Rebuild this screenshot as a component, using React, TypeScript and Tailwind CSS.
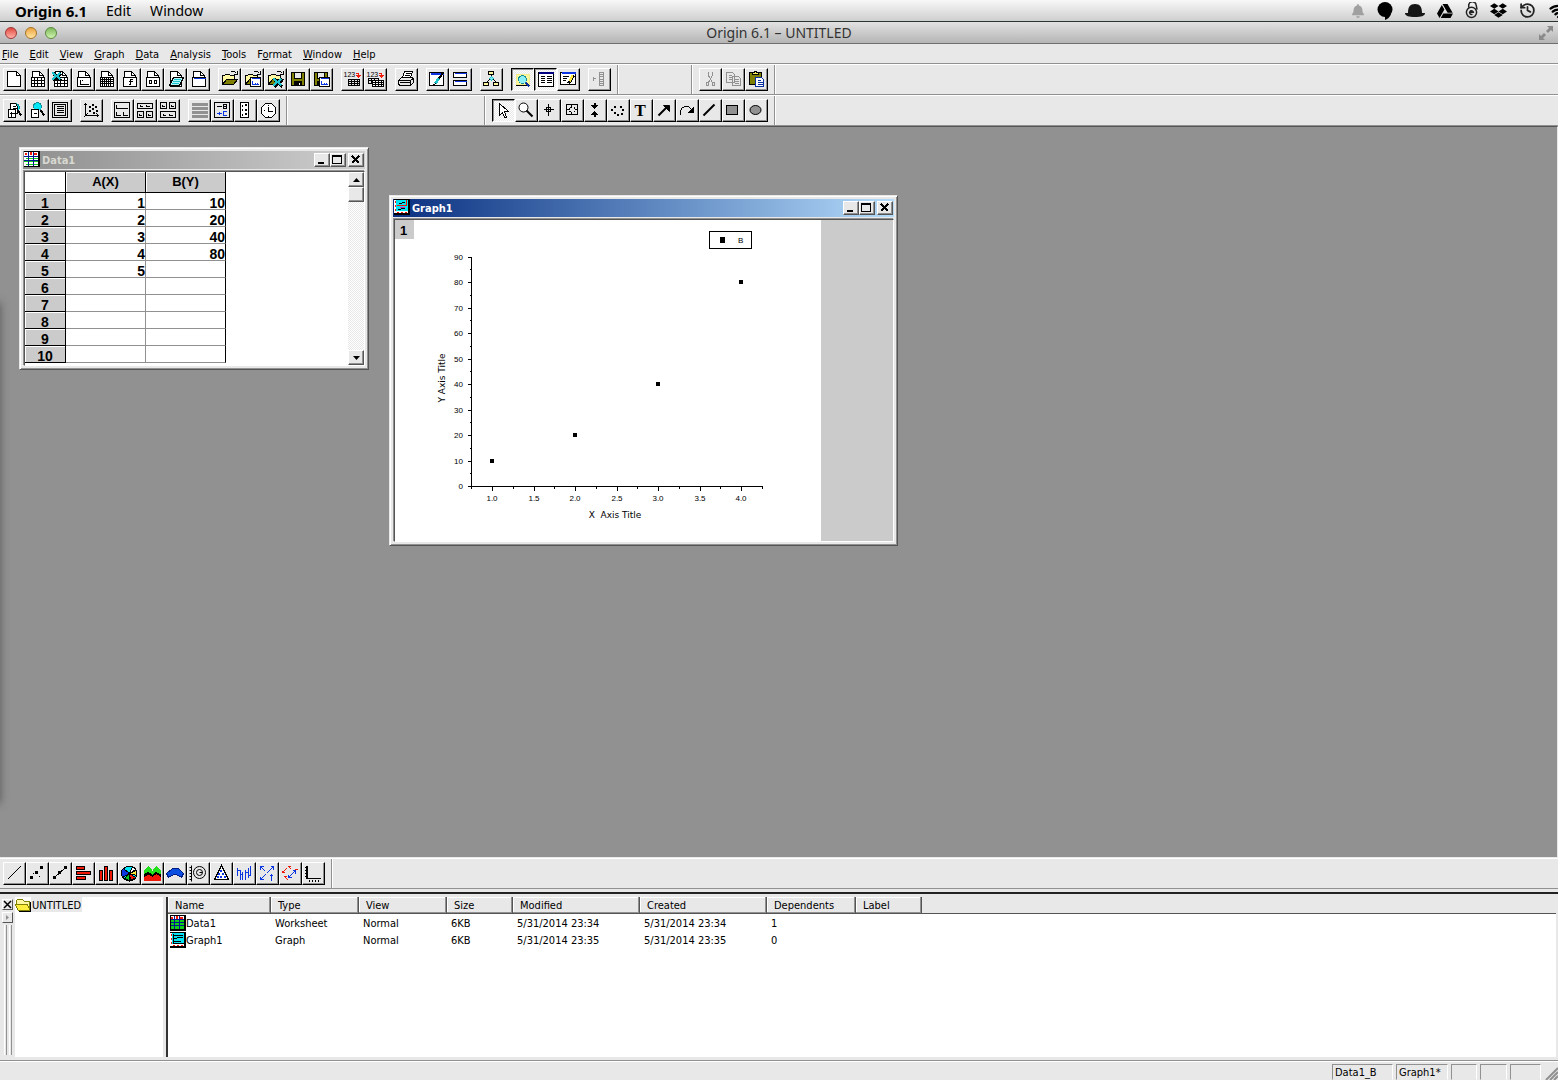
import type { ReactNode } from "react";
import clsx from "clsx";
import { History, Wifi } from "lucide-react";
import { FaBell, FaDropbox, FaGoogleDrive } from "react-icons/fa";

interface StrokeProps {
  d: string;
  s?: string;
  f?: string;
  w?: number;
}

// one pixel stroke, coordinates are pixel positions inside the button
function P({ d, s = "#000", f = "none", w = 1 }: StrokeProps) {
  return <path d={d} stroke={s} fill={f} strokeWidth={w} />;
}

function Icon({ children, smooth }: { children: ReactNode; smooth?: boolean }) {
  return (
    <svg
      viewBox="1 1 21 21"
      className="block h-[21px] w-[21px]"
      shapeRendering={smooth ? "auto" : "crispEdges"}
      aria-hidden="true"
    >
      <g transform="translate(.5 .5)">{children}</g>
    </svg>
  );
}

const CYAN = "#00e5f5";
const OLIVE = "#808000";
const BLUE = "#0a35e0";
const RED = "#f01808";
const GRAY = "#919191";

function Page() {
  return (
    <>
      <P d="M6 18V3h7l4 4v11z" f="#fff" />
      <P d="M13 3v4h4" />
    </>
  );
}

function PageBox({ children }: { children?: ReactNode }) {
  return (
    <Icon>
      <Page />
      <P d="M5 9h13v9h-13z" f="#fff" />
      {children}
    </Icon>
  );
}

function Folder() {
  return (
    <>
      <P d="M4 16V7h2l1-1h4l1 1h4v3" f="#fff8a0" />
      <P d="M4 16l4-5h11l-4 5z" f={OLIVE} />
      <P d="M12 4l1-1h3l2 2M19 2v4h-4" />
    </>
  );
}

function Floppy() {
  return (
    <>
      <P d="M4 4h13v13h-13z" f={OLIVE} />
      <P d="M7 4h7v6h-7z" f="#e8e8e8" />
      <P d="M7 13h7v4h-7z" f="#000" />
      <P d="M12 14v2" s="#fff" />
    </>
  );
}

function Excel({ x = 0, y = 0 }: { x?: number; y?: number }) {
  return (
    <g transform={`translate(${x} ${y})`}>
      <P d="M4 5l8 7M12 5l-8 7" w={3} />
      <P d="M3 4l8 7M11 4l-8 7" s="#1cc3cc" w={2} />
    </g>
  );
}

function MiniWindow() {
  return (
    <>
      <P d="M9 9h10v9h-10z" f="#fff" />
      <P d="M10 10h8" s={BLUE} />
      <P d="M11 12v4h6M14 16v-2M16 16v-2" s={BLUE} />
    </>
  );
}

function ImportArrow() {
  return (
    <>
      <text x="2" y="8" className="font-['Liberation_Sans'] text-[7px]">123</text>
      <P d="M14 5h3v3" s={RED} />
      <P d="M15 7h4l-2 2z" s={RED} f={RED} />
    </>
  );
}

type Tool = { label: string; icon: ReactNode; pressed?: boolean };

const newTools: Tool[] = [
  { label: "New Project", icon: <Icon><P d="M4 3h9l4 4v11h-13z" f="#fff" /><P d="M13 3v4h4" /></Icon> },
  { label: "New Worksheet", icon: <PageBox><P d="M5 12h13M5 15h13M8 9v9M11 9v9M15 9v9" /></PageBox> },
  { label: "New Excel", icon: <PageBox><P d="M5 12h13M5 15h13M8 9v9M11 9v9M15 9v9" /><Excel /></PageBox> },
  { label: "New Graph", icon: <PageBox><P d="M8 11v5h8M9 12h1M12 16v-1M14 16v-1" /></PageBox> },
  { label: "New Matrix", icon: <PageBox><P d="M5 11h13M5 13h13M5 15h13M7 9v9M9 9v9M11 9v9M13 9v9M15 9v9" /></PageBox> },
  { label: "New Function", icon: <PageBox><P d="M14 11h-2v5h-2M10 13h4" /></PageBox> },
  { label: "New Layout", icon: <PageBox><P d="M8 12h2v3h-2zM13 12h2v3h-2z" /></PageBox> },
  { label: "New Notes", icon: <Icon><Page /><P d="M9 9h10l-4 8h-10z" f="#b5f7fa" /><P d="M9 11h7M8 13h7M7 15h7" s="#1cc3cc" /></Icon> },
  { label: "New Window", icon: <PageBox><P d="M6 10h12" s={BLUE} /></PageBox> },
];

const fileTools: Tool[] = [
  { label: "Open", icon: <Icon><Folder /></Icon> },
  { label: "Open Template", icon: <Icon><Folder /><MiniWindow /></Icon> },
  { label: "Open Excel", icon: <Icon><Folder /><Excel x={6} y={6} /></Icon> },
  { label: "Save Project", icon: <Icon><Floppy /></Icon> },
  { label: "Save Template", icon: <Icon><Floppy /><MiniWindow /></Icon> },
];

const importTools: Tool[] = [
  { label: "Import ASCII", icon: <Icon><ImportArrow /><P d="M7 11h11v6h-11zM7 13h11M7 15h11M10 11v6M13 11v6M16 11v6" /></Icon> },
  { label: "Import Multiple", icon: <Icon><ImportArrow /><P d="M4 10h10v5h-10zM4 12h10M7 10v5M10 10v5" /><P d="M8 12h11v6h-11z" f="#fff" /><P d="M8 14h11M8 16h11M11 12v6M14 12v6M17 12v6" /></Icon> },
];

const printTools: Tool[] = [
  {
    label: "Print",
    icon: (
      <Icon>
        <P d="M7 9l2-6h8l-2 6z" f="#fff" />
        <P d="M10 5h5M9 7h5" />
        <P d="M3 12l3-3h10l2 1v4l-3 3h-11l-1-2z" f="#e8e8e8" />
        <P d="M3 12h12v4M15 12l3-2M4 14h11" />
      </Icon>
    ),
  },
];

const windowTools: Tool[] = [
  {
    label: "Refresh",
    icon: (
      <Icon>
        <P d="M3 4h14v13h-14z" f="#fff" />
        <P d="M4 5h13M4 6h13" s={BLUE} />
        <P d="M11 12l6-8" w={2} />
        <P d="M9 15l3-5" s="#1cc3cc" w={3} />
        <P d="M7 16l3-1" />
      </Icon>
    ),
  },
  {
    label: "Duplicate",
    icon: (
      <Icon>
        <P d="M4 4h13v5h-13zM4 12h13v5h-13z" f="#fff" />
        <P d="M5 5h12M5 13h12" s={BLUE} />
      </Icon>
    ),
  },
];

const codeTools: Tool[] = [
  {
    label: "Custom Routine",
    icon: (
      <Icon>
        <P d="M11 6v3M6 14l3-3M16 14l-3-3" />
        <P d="M8 3h5v3h-5zM3 14h5v3h-5zM13 14h5v3h-5z" f="#fff7a0" />
        <P d="M11 8l2 2-2 2-2-2z" f="#7fe9ef" s="#1cc3cc" />
      </Icon>
    ),
  },
];

const viewTools: Tool[] = [
  {
    label: "Project Explorer",
    pressed: true,
    icon: (
      <Icon>
        <P d="M5 6h13v10h-13z" s="#f5ec8a" f="#fbf6a0" />
        <P d="M4 17h11" />
        <P d="M14 14l4 4" s="#0a2fa0" w={2} />
        <circle cx="11" cy="11" r="4" fill="#8bf0f5" stroke="#128c96" />
      </Icon>
    ),
  },
  {
    label: "Results Log",
    pressed: true,
    icon: (
      <Icon>
        <P d="M4 4h15v14h-15z" f="#fff" />
        <P d="M4 4h15M4 5h15" s="#000080" />
        <P d="M6 8h4M12 8h5M6 10h4M12 10h5M6 12h4M12 12h5M6 14h4M12 14h5" />
      </Icon>
    ),
  },
  {
    label: "Script Window",
    icon: (
      <Icon>
        <P d="M3 4h15v12h-15z" f="#fff" />
        <P d="M4 4h14M4 5h14" s={BLUE} />
        <P d="M5 8h6M5 10h4M5 12h3" />
        <P d="M11 15l5-8" w={3} />
        <P d="M12 13l3-6" s="#ffe93a" w={2} />
      </Icon>
    ),
  },
];

const columnTools: Tool[] = [
  {
    label: "Add New Columns",
    icon: <Icon><P d="M11 4h4v13h-4zM11 6h4M11 8h4M11 11h4M11 13h4M11 15h4M4 10h3M5 8v4" s={GRAY} /></Icon>,
  },
];

const editTools: Tool[] = [
  {
    label: "Cut",
    icon: (
      <Icon>
        <P d="M9 3v4l4 7M13 3v4l-4 7" s={GRAY} />
        <P d="M7 14h2v3h-2zM13 14h2v3h-2z" s={GRAY} />
      </Icon>
    ),
  },
  {
    label: "Copy",
    icon: (
      <Icon>
        <P d="M4 4h6l2 2v8h-8zM10 8h6l2 2v7h-8z" s={GRAY} f="#e8e8e8" />
        <P d="M6 7h3M6 9h3M6 11h3M12 11h4M12 13h4M12 15h4" s={GRAY} />
      </Icon>
    ),
  },
  {
    label: "Paste",
    icon: (
      <Icon>
        <P d="M4 4h12v12h-12z" f={OLIVE} />
        <P d="M7 6v-2h2v-1h2v1h2v2z" f="#fff35c" />
        <P d="M10 9h6l2 2v7h-8z" f="#fff" s="#0a2fa0" />
        <P d="M12 12h3M12 14h5M12 16h5" s="#0a2fa0" />
      </Icon>
    ),
  },
];

const zoomTools: Tool[] = [
  {
    label: "Zoom In",
    icon: (
      <Icon>
        <circle cx="12" cy="8" r="4" fill={CYAN} stroke="#128c96" />
        <P d="M14 11l4 5" w={2} />
        <P d="M7 10V4h5l2 3v7h-2M9 7h3M9 9h4" f="#fff" />
        <P d="M5 10h7v8h-7z" f="#fff" />
        <P d="M6 14h5M8 12v5" />
      </Icon>
    ),
  },
  {
    label: "Zoom Out",
    icon: (
      <Icon>
        <circle cx="11" cy="7" r="4" fill={CYAN} stroke="#128c96" />
        <P d="M14 11l4 5" w={2} />
        <P d="M5 10h7v8h-7z" f="#fff" />
        <P d="M7 14h3" />
      </Icon>
    ),
  },
  {
    label: "Whole Page",
    icon: (
      <Icon>
        <P d="M3 3h15v15h-15zM5 5h11v11h-11z" />
        <P d="M7 7h7M7 9h7M7 11h7M7 13h7" />
      </Icon>
    ),
  },
];

const rescaleTools: Tool[] = [
  {
    label: "Rescale",
    icon: (
      <Icon>
        <P d="M5 4v12h13M3 6l2-2 2 2M16 14l2 2-2 2M7 14l-4 4" />
        <P d="M9 7h1v1h-1zM12 5h1v1h-1zM15 7h1v1h-1zM9 11h1v1h-1zM12 9h1v1h-1zM16 11h1v1h-1zM13 13h1v1h-1z" />
      </Icon>
    ),
  },
];

const layerTools: Tool[] = [
  { label: "Extract to Layers", icon: <Icon><P d="M3 3h15v15h-15z" /><P d="M5 5v4h11M5 12v4h4M12 12v4h4" /></Icon> },
  { label: "Extract to Graphs", icon: <Icon><P d="M3 4h15v5h-15zM3 12h6v6h-6zM12 12h6v6h-6z" /><P d="M6 5v2h2M12 5v2h3M5 14v2h2M14 14v2h2" /></Icon> },
  { label: "Merge", icon: <Icon><P d="M3 3h6v6h-6zM12 3h6v6h-6zM3 12h15v6h-15z" /><P d="M5 5v2h2M14 5v2h2M6 14v2h2M12 14v2h3" /></Icon> },
];

const graphTools: Tool[] = [
  { label: "Add Color Scale", icon: <Icon><P d="M3 5h16M3 9h16M3 13h16M3 17h16" s={GRAY} w={3} /></Icon> },
  {
    label: "New Legend",
    icon: (
      <Icon>
        <P d="M3 3h15v15h-15z" />
        <P d="M5 7h5M12 5h3v4h-3zM12 7h3" />
        <P d="M5 14h5M7 13h1v2h-1M15 12h-3v4h3" s={BLUE} />
      </Icon>
    ),
  },
  {
    label: "Add XY Scale",
    icon: (
      <Icon>
        <P d="M6 3h8v15h-8z" f="#fff" />
        <P d="M8 5v2M8 9v2M8 14v2M11 5h1v1h-1zM11 10h1v1h-1zM11 14h1v1h-1z" />
      </Icon>
    ),
  },
  {
    label: "Date & Time",
    icon: (
      <Icon>
        <P d="M8 4h6l4 4v6l-4 4h-6l-4-4v-6z" f="#fff" />
        <P d="M11 7v5h4M11 5v1M11 16v1M6 11h1" />
      </Icon>
    ),
  },
];

const drawTools: Tool[] = [
  { label: "Pointer", pressed: true, icon: <Icon><P d="M7 4v12l3-3 2 5h2l-2-6h4z" f="#fff" /></Icon> },
  { label: "Zoom", icon: <Icon smooth><circle cx="8" cy="8" r="4.5" fill="#fff" stroke="#000" /><P d="M11 11l6 6" w={2} /></Icon> },
  { label: "Screen Reader", icon: <Icon><P d="M10 4v12M5 10h10M8 8h4v4h-4z" /></Icon> },
  { label: "Data Reader", icon: <Icon><P d="M5 5h11v10h-11zM10 5v3M10 12v3M5 10h3M13 10h3M8 8h1M8 12h1M12 8h1M12 12h1M8 8v1M8 11v1M13 8v1M13 11v1" /></Icon> },
  { label: "Data Selector", icon: <Icon><P d="M10 3v4M10 13v4" w={2} /><P d="M7 6h6l-3 3zM7 15h6l-3-3z" f="#000" /></Icon> },
  { label: "Draw Data", icon: <Icon><P d="M4 10h1v1h-1zM7 7h1v1h-1zM13 7h1v1h-1zM15 10h1v1h-1zM14 14h1v1h-1zM7 13h1v1h-1zM10 15h1v1h-1z" /></Icon> },
  { label: "Text", icon: <Icon smooth><text x="4" y="16" className="font-['Liberation_Serif'] text-[17px] font-bold">T</text></Icon> },
  { label: "Arrow", icon: <Icon smooth><P d="M5 16l9-9" w={2} /><P d="M10 6h6v6z" f="#000" /></Icon> },
  { label: "Curved Arrow", icon: <Icon><P d="M4 15v-4l2-3 3-1h3l3 3" /><P d="M17 8v5h-5z" f="#000" /></Icon> },
  { label: "Line", icon: <Icon smooth><P d="M4 16L15 5" w={2} /></Icon> },
  { label: "Rectangle", icon: <Icon><P d="M4 6h11v9h-11z" f={GRAY} /></Icon> },
  { label: "Ellipse", icon: <Icon smooth><ellipse cx="10" cy="10.5" rx="5.500" ry="4.500" fill={GRAY} stroke="#000" /></Icon> },
];

const plotTools: Tool[] = [
  { label: "Line", icon: <Icon><P d="M4 17L17 4" /></Icon> },
  { label: "Scatter", icon: <Icon><P d="M4 14h2v2h-2zM9 9h2v2h-2zM14 4h2v2h-2z" f="#000" /><P d="M6 11h1M12 14h1" /></Icon> },
  { label: "Line + Symbol", icon: <Icon><P d="M4 16L17 4" /><P d="M4 14h2v2h-2zM9 9h2v2h-2zM15 4h2v2h-2z" f="#000" /></Icon> },
  { label: "Bar", icon: <Icon><P d="M4 4h8v3h-8zM4 9h14v3h-14zM4 14h9v3h-9z" f={RED} /></Icon> },
  { label: "Column", icon: <Icon><P d="M4 8h3v10h-3zM9 4h3v14h-3zM14 8h3v10h-3z" f={RED} /></Icon> },
  {
    label: "Pie",
    icon: (
      <Icon>
        <circle cx="11" cy="11" r="7.500" fill={CYAN} stroke="#000" />
        <P d="M11 11L5 6A7 7 0 0 0 4 15z" f={BLUE} />
        <P d="M11 11l7-3a8 8 0 0 1 0 5z" f="#ffe93a" />
        <P d="M11 11l6 4-5 3z" f={RED} />
        <P d="M11 11L6 16l5 2z" f="#0cc41c" />
        <P d="M11 11l3-7 3 3z" f="#fff" />
      </Icon>
    ),
  },
  {
    label: "Area",
    icon: (
      <Icon>
        <P d="M3 15V8l4-4 4 5 4-5 4 4v7z" s="#22e01c" f="#22e01c" />
        <P d="M3 12l4-2 4 3 3-3 5 2v3h-16z" f="#000" />
        <P d="M3 18v-3l4-2 4 2 4-3 4 3v3z" s={RED} f={RED} />
      </Icon>
    ),
  },
  { label: "Fill Area", icon: <Icon><P d="M2 11l6-5h6l5 5-2 4-5-3h-3l-5 3z" f="#0a4fe0" s="#001c80" /></Icon> },
  {
    label: "Polar",
    icon: (
      <Icon smooth>
        <P d="M4 3v16M2 5h2M2 8h2M2 11h2M2 14h2M2 17h2" />
        <circle cx="12" cy="10" r="6" fill="none" stroke="#000" />
        <circle cx="12" cy="10" r="3" fill="none" stroke="#000" />
        <P d="M12 10h3" />
      </Icon>
    ),
  },
  {
    label: "Ternary",
    icon: (
      <Icon>
        <P d="M11 3L4 17h14z" f="#fff" />
        <P d="M10 8h1v1h-1zM8 11h1v1h-1zM12 11h1v1h-1zM7 14h1v1h-1zM10 14h1v1h-1zM14 14h1v1h-1z" s={BLUE} />
      </Icon>
    ),
  },
  { label: "High-Low-Close", icon: <Icon><P d="M4 5v8M4 8h2M7 7v10M9 9v8M7 12h2M12 7v10M12 10h2M15 5v10M15 13h2M17 3v9" s={BLUE} /></Icon> },
  { label: "Vector XYAM", icon: <Icon><P d="M4 4l5 5M4 4h3M4 4v3M10 11L17 4M14 4h3v3M9 12l-5 5M4 14v3h3M15 18v-6M13 14l2-2 2 2" s={BLUE} /></Icon> },
  { label: "Vector XYXY", icon: <Icon><P d="M9 15l7-7M16 8v3M16 8h-3M9 15v-3M9 15h3" s={BLUE} /><P d="M3 10l4-4M3 10h2M3 10v-2M9 4l3 3M9 4h2M18 7h-3M5 14l4 4M5 14h2" s={RED} /></Icon> },
  { label: "Template", icon: <Icon><P d="M4 3v13h14M5 3v13" /><P d="M2 5h2M2 8h2M2 11h2M2 14h2M7 17v2M10 17v2M13 17v2M16 17v2" /></Icon> },
];

function ToolButton({ label, icon, pressed }: Tool) {
  return (
    <button
      type="button"
      aria-label={label}
      aria-pressed={pressed}
      className={clsx(
        "h-[23px] w-[23px] shrink-0 border",
        pressed
          ? "border-t-black border-l-black border-r-white border-b-white bg-[repeating-conic-gradient(#fff_0_25%,#e8e8e8_0_50%)] bg-[length:2px_2px] shadow-[inset_1px_1px_0_#919191]"
          : "border-t-white border-l-white border-r-black border-b-black bg-[#e8e8e8] shadow-[inset_-1px_-1px_0_#919191]"
      )}
    >
      {icon}
    </button>
  );
}

function ToolGroup({ tools }: { tools: Tool[] }) {
  return (
    <div className="flex">
      {tools.map((t) => (
        <ToolButton key={t.label} {...t} />
      ))}
    </div>
  );
}

function Divider() {
  return <div className="-my-[3px] w-[2px] self-stretch border-l border-[#919191] bg-white" />;
}

function ToolRow({ children }: { children: ReactNode }) {
  return (
    <div className="flex gap-2 border-t border-b border-t-white border-b-[#919191] py-[3px] pl-[3px]">
      {children}
    </div>
  );
}

const menus = [
  ["", "F", "ile"],
  ["", "E", "dit"],
  ["", "V", "iew"],
  ["", "G", "raph"],
  ["", "D", "ata"],
  ["", "A", "nalysis"],
  ["", "T", "ools"],
  ["F", "o", "rmat"],
  ["", "W", "indow"],
  ["", "H", "elp"],
];

function MacMenuBar() {
  return (
    <header className="flex h-[22px] shrink-0 items-center border-b border-[#2b3535] bg-linear-to-b from-[#f8f8f8] to-[#cfcfcf] font-['Noto_Sans',sans-serif] text-[14px] leading-[20px]">
      <nav className="flex gap-[19px] pl-[15px]">
        <button type="button" className="text-[15px] font-bold">Origin 6.1</button>
        <button type="button">Edit</button>
        <button type="button">Window</button>
      </nav>
      <div className="ml-auto flex items-center gap-3">
        <FaBell className="h-[14px] w-[14px] text-[#a0a0a0]" />
        <svg viewBox="0 0 16 18" className="h-[18px] w-4">
          <circle cx="8" cy="7.500" r="7.500" />
          <path d="M8 12h6c-1 3-3 5-6 6z" />
        </svg>
        <svg viewBox="0 0 20 14" className="h-[14px] w-5">
          <path d="M3 9C3 3 5 0 10 0s7 3 7 9l3 0c0 3-4 4-10 4S0 12 0 9z" fill="#151515" />
        </svg>
        <FaGoogleDrive className="h-4 w-4" />
        <svg viewBox="0 0 14 18" className="h-[17px] w-[13px]" fill="none" stroke="#222" strokeWidth="1.6">
          <path d="M4 6V4a3 3 0 0 1 8-1l1 5" />
          <circle cx="7" cy="11" r="5.5" />
          <path d="M5 11h4a2 2 0 1 0-1 2" />
        </svg>
        <FaDropbox className="h-[17px] w-[17px]" />
        <History className="h-[17px] w-[17px] text-[#222]" strokeWidth={2.5} />
        <div className="w-[10px] overflow-hidden">
          <Wifi className="h-[18px] w-[20px]" strokeWidth={3} />
        </div>
      </div>
    </header>
  );
}

function TitleBar() {
  return (
    <div className="flex h-[22px] shrink-0 items-center border-b border-[#6f6f6f] bg-linear-to-b from-[#e2e2e2] to-[#b5b5b5] px-[5px] font-['Noto_Sans',sans-serif] text-[14px] leading-[20px] text-[#333]">
      <div className="flex w-20 gap-2">
        <button type="button" aria-label="Close" className="h-3 w-3 rounded-full border border-[#9c3a35] bg-linear-to-b from-[#e0443f] to-[#ffb0a8]" />
        <button type="button" aria-label="Minimize" className="h-3 w-3 rounded-full border border-[#a87428] bg-linear-to-b from-[#eba23a] to-[#ffe6a0]" />
        <button type="button" aria-label="Zoom" className="h-3 w-3 rounded-full border border-[#5a8a40] bg-linear-to-b from-[#7fb85c] to-[#d0f5b0]" />
      </div>
      <h1 className="flex-1 text-center">Origin 6.1 – UNTITLED</h1>
      <div className="flex w-20 justify-end">
        <svg viewBox="0 0 14 14" className="h-[14px] w-[14px]" fill="#8a8a8a">
          <path d="M8 0h6v6l-2-2-3 3-2-2 3-3zM6 14H0V8l2 2 3-3 2 2-3 3z" />
        </svg>
      </div>
    </div>
  );
}

// the list shows a denser version of the window icon
function SheetIcon({ dense }: { dense?: boolean }) {
  return (
    <svg viewBox="0 0 16 16" className="h-4 w-4 shrink-0" shapeRendering="crispEdges">
      <path d="M0 0h16v16H0z" />
      <path d={dense ? "M1 1h13v13H1z" : "M0 1h14v14H0z"} fill="#fff" />
      <path d="M1 2h2v2H1zM6 1h2v3H6zM10 2h3v2h-3z" fill={RED} />
      <path
        d={dense ? "M1 5h13v2H1zM1 8h13v2H1zM1 11h13v3H1z" : "M2 7h12v1H2zM0 10h14v1H0zM2 13h12v1H2z"}
        fill="#10d01c"
      />
      <path
        d={dense ? "M4 1h1v13H4zM9 1h1v13H9zM1 4h13v1H1zM1 7h13v1H1zM1 10h13v1H1z" : "M4 1h1v14H4zM9 1h1v14H9zM0 5h14v1H0zM0 9h14v1H0z"}
        fill="#001a90"
      />
    </svg>
  );
}

function GraphIcon({ dense }: { dense?: boolean }) {
  return (
    <svg viewBox="0 0 16 16" className="h-4 w-4 shrink-0" shapeRendering="crispEdges">
      <path d="M0 0h16v16H0z" />
      <path d="M0 1h14v13H0z" fill="#fff" />
      <path d="M2 1h12v11H2z" fill={CYAN} />
      <path d="M1 2h1v2H1zM1 6h1v2H1zM1 10h1v2H1zM3 13h2v1H3zM7 13h2v1H7zM11 13h2v1h-2z" fill={RED} />
      {dense ? (
        <path d="M3 2h1v10H3zM4 3h9v1H4zM4 6h3v1H4zM7 5h6v1H7zM4 9h7v1H4zM4 11h10v1H4z" />
      ) : (
        <>
          <path d="M5 4h3v1H5zM8 3h3v1H8zM4 10h3v1H4zM7 9h4v1H7z" />
          <path d="M3 6h10v1H3zM12 1h1v6h-1z" fill={RED} />
          <path d="M6 8h5v1H6z" fill="#d020c8" />
        </>
      )}
    </svg>
  );
}

const raised = "border border-t-white border-l-white border-r-[#555] border-b-[#555] bg-[#e8e8e8] shadow-[inset_-1px_-1px_0_#919191]";
const winButton = clsx(raised, "flex h-[14px] w-4 items-center justify-center");

function WindowButtons() {
  return (
    <div className="ml-auto flex pr-[1px]">
      <button type="button" aria-label="Minimize" className={winButton}>
        <svg viewBox="0 0 14 12" className="h-3 w-[14px] shrink-0" shapeRendering="crispEdges"><path d="M3 8h6v2H3z" /></svg>
      </button>
      <button type="button" aria-label="Maximize" className={winButton}>
        <svg viewBox="0 0 14 12" className="h-3 w-[14px] shrink-0" shapeRendering="crispEdges"><path d="M1 1h10v9H1zM2 3v6h8V3z" fillRule="evenodd" /></svg>
      </button>
      <button type="button" aria-label="Close" className={clsx(winButton, "ml-[2px]")}>
        <svg viewBox="0 0 14 12" className="h-3 w-[14px] shrink-0" shapeRendering="crispEdges"><path d="M3 2l7 7M10 2l-7 7" stroke="#000" strokeWidth="2" /></svg>
      </button>
    </div>
  );
}

interface ChildWindowProps {
  title: string;
  icon: ReactNode;
  active?: boolean;
  className: string;
  children: ReactNode;
}

function ChildWindow({ title, icon, active, className, children }: ChildWindowProps) {
  return (
    <section
      className={clsx(
        "absolute flex flex-col border border-t-[#e8e8e8] border-l-[#e8e8e8] border-r-[#555] border-b-[#555] bg-[#e8e8e8] p-[3px] shadow-[inset_1px_1px_0_#fff,inset_-1px_-1px_0_#919191]",
        className
      )}
    >
      <div
        className={clsx(
          "flex h-[18px] shrink-0 items-center pl-[1px] font-['DejaVu_Sans_Condensed','DejaVu_Sans',sans-serif] text-[11px] font-bold",
          active
            ? "bg-linear-to-r from-[#0a2f80] to-[#b5dbfa] text-white"
            : "bg-linear-to-r from-[#8f8f8f] to-[#cfcfcf] text-[#d8d8d0]"
        )}
      >
        <div className="mb-[2px]">{icon}</div>
        <h2 className="ml-[2px] pt-[2px] leading-[14px]">{title}</h2>
        <WindowButtons />
      </div>
      <div className="mt-[2px] ml-[1px] flex min-h-0 flex-1 border border-t-[#555] border-l-[#555] border-r-white border-b-white bg-white shadow-[-1px_-1px_0_#919191]">
        {children}
      </div>
    </section>
  );
}

const sheetRows: [number, string, string][] = [
  [1, "1", "10"],
  [2, "2", "20"],
  [3, "3", "40"],
  [4, "4", "80"],
  [5, "5", ""],
  [6, "", ""],
  [7, "", ""],
  [8, "", ""],
  [9, "", ""],
  [10, "", ""],
];

const headCell = "border-r border-b border-black bg-[#cbcbcb] p-0 shadow-[inset_1px_1px_0_#fff]";

function Worksheet() {
  return (
    <>
      <div className="flex-1 overflow-hidden">
        <table className="w-[201px] table-fixed border-separate border-spacing-0 font-['Liberation_Sans',sans-serif] font-bold">
          <thead>
            <tr className="h-[21px] text-[13px] leading-[18px]">
              <td className="w-[41px] border-r border-b border-black p-0" />
              <th scope="col" className={headCell}>A(X)</th>
              <th scope="col" className={headCell}>B(Y)</th>
            </tr>
          </thead>
          <tbody>
            {sheetRows.map(([n, a, b]) => (
              <tr key={n} className="h-[17px] text-[14px] leading-3">
                <th scope="row" className={clsx(headCell, "pt-1")}>{n}</th>
                <td className="border-r border-b border-[#919191] p-0 pt-1 text-right">{a}</td>
                <td className="border-r border-b border-r-black border-b-[#919191] p-0 pt-1 text-right">{b}</td>
              </tr>
            ))}
          </tbody>
        </table>
      </div>
      <div className="flex w-4 flex-col bg-[repeating-conic-gradient(#fff_0_25%,#e8e8e8_0_50%)] bg-[length:2px_2px]">
        <button type="button" aria-label="Scroll up" className={clsx(raised, "flex h-[15px] items-center justify-center")}>
          <svg viewBox="0 0 7 4" className="h-1 w-[7px]"><path d="M0 4l3.500-4L7 4z" /></svg>
        </button>
        <div className={clsx(raised, "h-[15px]")} />
        <button type="button" aria-label="Scroll down" className={clsx(raised, "mt-auto flex h-[15px] items-center justify-center")}>
          <svg viewBox="0 0 7 4" className="h-1 w-[7px]"><path d="M0 0l3.500 4L7 0z" /></svg>
        </button>
      </div>
    </>
  );
}

const points = [
  [1, 10],
  [2, 20],
  [3, 40],
  [4, 80],
];

const toX = (v: number) => Math.round(97 + (v - 1) * 83);
const toY = (v: number) => Math.round(266 - v * 2.55);

function Plot() {
  const yMajor = Array.from({ length: 10 }, (_, i) => i * 10);
  const xMajor = Array.from({ length: 7 }, (_, i) => 1 + i * 0.5);

  return (
    <svg viewBox="0 0 426 320" className="h-[320px] w-[426px] shrink-0 font-['Liberation_Sans',sans-serif] text-[8px]">
      <path d="M0 0h19v19H0z" fill="#cbcbcb" />
      <text x="5" y="15" className="text-[13px] font-bold">1</text>
      <g stroke="#000" fill="none" shapeRendering="crispEdges" transform="translate(.5 .5)">
        <path d="M76 37v229h291" />
        {yMajor.map((v) => (
          <path key={v} d={`M72 ${toY(v)}h4`} />
        ))}
        {yMajor.slice(1).map((v) => (
          <path key={v} d={`M74 ${toY(v - 5)}h2`} />
        ))}
        {xMajor.map((v) => (
          <path key={v} d={`M${toX(v)} 266v4M${toX(v + 0.25)} 266v2`} />
        ))}
        <path d="M76 266v2" />
        <path d="M314 11h42v17h-42z" />
      </g>
      {points.map(([x, y]) => (
        <rect key={x} x={toX(x) - 2} y={toY(y) - 2} width="4" height="4" />
      ))}
      <rect x="325" y="17" width="5" height="6" />
      <text x="343" y="23">B</text>
      {yMajor.map((v) => (
        <text key={v} x="68" y={toY(v) + 3} textAnchor="end">{v}</text>
      ))}
      {xMajor.map((v) => (
        <text key={v} x={toX(v)} y="281" textAnchor="middle">{v.toFixed(1)}</text>
      ))}
      <text x="220" y="298" textAnchor="middle" className="font-['DejaVu_Sans'] text-[9px] whitespace-pre">{"X  Axis Title"}</text>
      <text transform="translate(50 158) rotate(-90)" textAnchor="middle" className="font-['DejaVu_Sans'] text-[9px]">Y Axis Title</text>
    </svg>
  );
}

const columns = [
  { label: "Name", width: "w-[103px]" },
  { label: "Type", width: "w-[88px]" },
  { label: "View", width: "w-[88px]" },
  { label: "Size", width: "w-[66px]" },
  { label: "Modified", width: "w-[127px]" },
  { label: "Created", width: "w-[127px]" },
  { label: "Dependents", width: "w-[89px]" },
  { label: "Label", width: "w-[66px]" },
];

const files = [
  { icon: <SheetIcon dense />, cells: ["Data1", "Worksheet", "Normal", "6KB", "5/31/2014 23:34", "5/31/2014 23:34", "1", ""] },
  { icon: <GraphIcon dense />, cells: ["Graph1", "Graph", "Normal", "6KB", "5/31/2014 23:35", "5/31/2014 23:35", "0", ""] },
];

function Explorer() {
  return (
    <div className="flex h-[163px] shrink-0 pt-[3px] pr-[2px]">
      <div className="flex w-[15px] flex-col items-center gap-[2px] pt-[2px]">
        <button type="button" aria-label="Close explorer" className="h-[11px] w-[11px] border border-t-white border-l-white border-r-[#555] border-b-[#555]">
          <svg viewBox="0 0 9 9" className="h-[9px] w-[9px]"><path d="M1 1l7 7M8 1L1 8" stroke="#000" strokeWidth="1.500" /></svg>
        </button>
        <button type="button" aria-label="Expand" className="h-[11px] w-[11px] border border-t-white border-l-white border-r-[#555] border-b-[#555]">
          <svg viewBox="0 0 9 9" className="h-[9px] w-[9px]"><path d="M3 2l3 2.500L3 7z" fill={GRAY} /></svg>
        </button>
        <div className="flex flex-1 gap-[2px] pb-[2px]">
          <div className="w-[3px] border-l border-r border-l-white border-r-[#919191]" />
          <div className="w-[3px] border-l border-r border-l-white border-r-[#919191]" />
        </div>
      </div>
      <div className="w-[148px] bg-white">
        <button type="button" className="flex h-[15px] items-center">
          <svg viewBox="0 0 16 14" className="h-[14px] w-4" shapeRendering="crispEdges">
            <path d="M1 3l2-2h4l2 2h5v9H3z" fill="#fff8a0" stroke="#808000" />
            <path d="M0 6h12l3 6H3z" fill="#ffee3c" stroke="#808000" />
            <path d="M15 4v9H4" stroke="#000" fill="none" />
          </svg>
          <span className="bg-[#e8e8e8] px-[1px] pt-[2px] leading-[13px]">UNTITLED</span>
        </button>
      </div>
      <div className="ml-[3px] min-w-0 flex-1 border-l-2 border-[#333] bg-white">
        <table className="w-full table-fixed border-separate border-spacing-0 text-left">
          <thead>
            <tr className="h-[17px] bg-[#e8e8e8]">
              {columns.map((c) => (
                <th
                  key={c.label}
                  scope="col"
                  className={clsx(
                    c.width,
                    "border-r border-b border-[#555] p-0 pt-[2px] pl-[7px] leading-[14px] font-normal shadow-[inset_-1px_-1px_0_#919191,inset_1px_1px_0_#fff]"
                  )}
                >
                  {c.label}
                </th>
              ))}
              <td className="border-b border-[#555]" />
            </tr>
          </thead>
          <tbody>
            {files.map(({ icon, cells }) => (
              <tr key={cells[0]} className="h-[17px]">
                {cells.map((cell, i) => (
                  <td key={i} className={clsx("p-0 leading-[15px]", i === 0 ? "pl-[2px]" : "pt-[2px] pl-1")}>
                    {i === 0 ? (
                      <span className="flex h-[17px] items-center">
                        {icon}
                        <span className="pt-[2px]">{cell}</span>
                      </span>
                    ) : (
                      cell
                    )}
                  </td>
                ))}
              </tr>
            ))}
          </tbody>
        </table>
      </div>
    </div>
  );
}

const statusCell = "h-4 border border-t-[#919191] border-l-[#919191] border-r-white border-b-[#e8e8e8] pl-[2px] pt-[1px] leading-[14px]";

function StatusBar() {
  return (
    <footer className="mt-[3px] flex h-5 shrink-0 items-end justify-end gap-[3px] overflow-hidden border-t border-[#919191] shadow-[inset_0_1px_0_#fff]">
      <div className={clsx(statusCell, "w-[61px]")}>Data1_B</div>
      <div className={clsx(statusCell, "w-[52px]")}>Graph1*</div>
      <div className={clsx(statusCell, "w-[26px]")} />
      <div className={clsx(statusCell, "w-[27px]")} />
      <div className={clsx(statusCell, "w-[31px]")} />
      <svg viewBox="0 0 14 14" className="h-[14px] w-[14px]">
        <path d="M2 14L14 2M6 14l8-8M10 14l4-4" stroke={GRAY} strokeWidth="2" />
      </svg>
    </footer>
  );
}

export default function App() {
  return (
    <div className="flex h-screen min-h-[700px] flex-col overflow-hidden bg-[#e8e8e8] font-['DejaVu_Sans_Condensed','DejaVu_Sans',sans-serif] text-[11px] text-black">
      <MacMenuBar />
      <TitleBar />
      <nav className="flex h-5 shrink-0 items-center gap-[11px] border-b border-[#919191] pt-[3px] pl-[2px] leading-[16px]">
        {menus.map(([pre, key, post]) => (
          <button type="button" key={key + post}>
            {pre}
            <span className="underline underline-offset-1">{key}</span>
            {post}
          </button>
        ))}
      </nav>

      {/* Toolbars */}
      <ToolRow>
        <ToolGroup tools={newTools} />
        <ToolGroup tools={fileTools} />
        <ToolGroup tools={importTools} />
        <ToolGroup tools={printTools} />
        <ToolGroup tools={windowTools} />
        <ToolGroup tools={codeTools} />
        <ToolGroup tools={viewTools} />
        <ToolGroup tools={columnTools} />
        <div className="-ml-[2px] flex w-[76px] justify-between">
          <Divider />
          <Divider />
        </div>
        <div className="-ml-[2px] flex gap-[6px]">
          <ToolGroup tools={editTools} />
          <Divider />
        </div>
      </ToolRow>
      <ToolRow>
        <ToolGroup tools={zoomTools} />
        <ToolGroup tools={rescaleTools} />
        <ToolGroup tools={layerTools} />
        <ToolGroup tools={graphTools} />
        <div className="-ml-[2px] flex w-[200px] justify-between">
          <Divider />
          <Divider />
        </div>
        <div className="-ml-[2px] flex gap-[6px]">
          <ToolGroup tools={drawTools} />
          <Divider />
        </div>
      </ToolRow>

      {/* Workspace */}
      <main className="relative flex-1 overflow-hidden border-t border-r border-t-[#555] border-r-[#e8e8e8] bg-[#919191]">
        <div className="absolute top-[176px] -left-2 h-[500px] w-2 shadow-[0_0_8px_#555]" />
        <ChildWindow title="Data1" icon={<SheetIcon />} className="top-5 left-[19px] h-[223px] w-[350px]">
          <Worksheet />
        </ChildWindow>
        <ChildWindow title="Graph1" icon={<GraphIcon />} active className="top-[68px] left-[389px] h-[351px] w-[509px]">
          <div className="flex flex-1 overflow-hidden bg-[#cbcbcb]">
            <div className="bg-white">
              <Plot />
            </div>
          </div>
        </ChildWindow>
      </main>

      {/* Plot toolbar */}
      <div className="shrink-0 border-b-2 border-[#222] pt-[1px] pb-[3px]">
        <ToolRow>
          <div className="flex gap-[6px]">
            <ToolGroup tools={plotTools} />
            <Divider />
          </div>
        </ToolRow>
      </div>

      <Explorer />
      <StatusBar />
    </div>
  );
}
